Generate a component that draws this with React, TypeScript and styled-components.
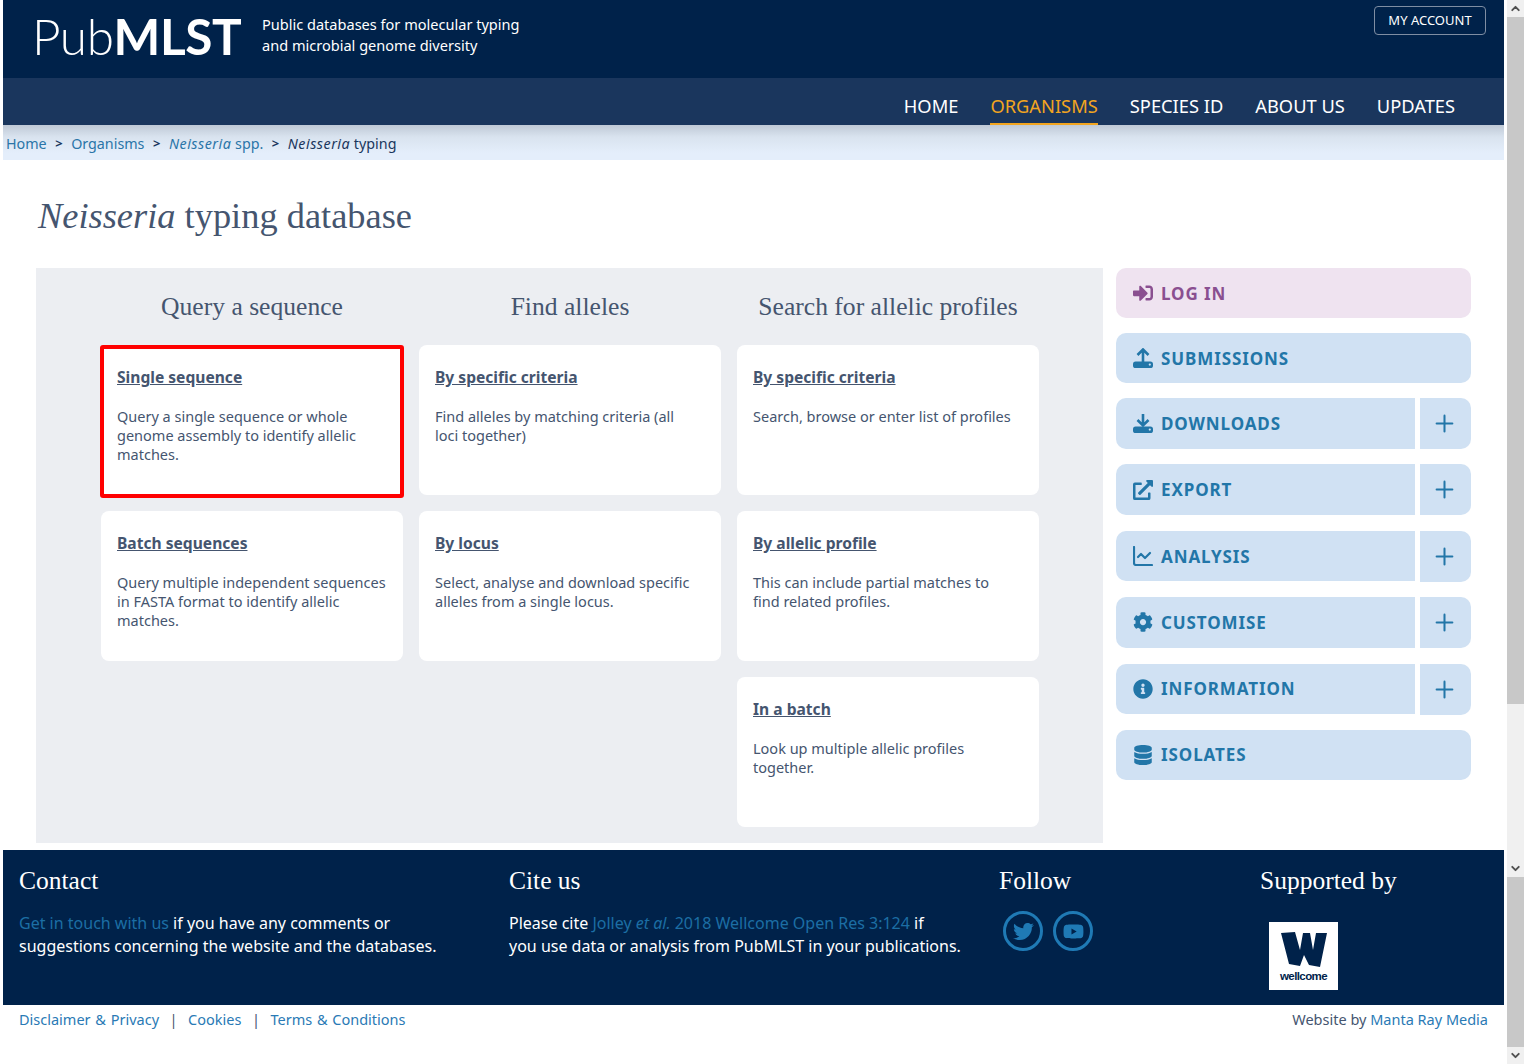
import React from 'react';
import styled, { createGlobalStyle } from 'styled-components';
import {
  FaSignInAlt,
  FaExternalLinkAlt,
  FaCog,
  FaInfoCircle,
  FaDatabase,
  FaTwitter,
  FaYoutube,
} from 'react-icons/fa';
import { Plus, ChevronUp, ChevronDown, ChartLine } from 'lucide-react';

const sans = `'Noto Sans', 'Open Sans', sans-serif`;
const serif = `'Liberation Serif', serif`;

const GlobalStyle = createGlobalStyle`
  html, body {
    margin: 0;
    height: 100%;
    overflow: hidden;
    background: #fff;
  }
  body {
    font-family: ${sans};
    color: #45556f;
  }
`;

const Shell = styled.div`
  display: flex;
  height: 1064px;
`;

const Page = styled.div`
  width: 1501px;
  margin: 0 3px;
  display: flex;
  flex-direction: column;
`;

const Scrollbar = styled.div`
  width: 17px;
  display: flex;
  flex-direction: column;
  background: #f0f0f0;
  color: #505050;
`;

const ScrollArrow = styled.div`
  height: 17px;
  display: flex;
  align-items: center;
  justify-content: center;
`;

const ScrollThumb = styled.div<{ $h: number }>`
  height: ${(p) => p.$h}px;
  background: #c8c8c8;
`;

const ScrollTrack = styled.div`
  flex: 1;
  display: flex;
  flex-direction: column;
  justify-content: flex-end;
`;

const TopBar = styled.header`
  height: 78px;
  background: #00224a;
  display: flex;
  align-items: flex-start;
  color: #fff;
  padding: 0 18px 0 29px;
  box-sizing: border-box;
`;

const Logo = styled.div`
  font-size: 49.5px;
  line-height: 72px;
  font-family: 'Lato', ${sans};
  font-weight: 300;
  letter-spacing: -0.4px;
  width: 230px;
  flex: none;
  b {
    font-weight: 700;
  }
`;

const Tagline = styled.div`
  font-size: 14.55px;
  line-height: 21px;
  padding-top: 14px;
  flex: 1;
`;

const AccountButton = styled.a`
  margin-top: 6px;
  width: 112px;
  height: 29px;
  box-sizing: border-box;
  border: 1px solid #7f8ea3;
  border-radius: 4px;
  font-size: 13px;
  padding-bottom: 2px;
  display: flex;
  align-items: center;
  justify-content: center;
`;

const NavBar = styled.nav`
  height: 47px;
  background: #1a365d;
  display: flex;
  justify-content: flex-end;
  gap: 32px;
  padding-right: 49px;
`;

const NavItem = styled.a<{ $active?: boolean }>`
  height: 47px;
  box-sizing: border-box;
  padding-top: 14px;
  font-size: 18.3px;
  line-height: 28px;
  color: ${(p) => (p.$active ? '#f2a51f' : '#fff')};
  border-bottom: 2px solid ${(p) => (p.$active ? '#f2a51f' : 'transparent')};
`;

const Breadcrumbs = styled.div`
  height: 35px;
  box-sizing: border-box;
  padding: 1px 0 0 3px;
  background: linear-gradient(#bfc9d6 0, #d9e3ef 12px, #e4eefb 28px);
  display: flex;
  align-items: center;
  font-size: 14.3px;
  color: #1a365d;
  i {
    letter-spacing: 0.5px;
  }
`;

const Crumb = styled.a`
  color: #2a75a8;
`;

const CrumbSep = styled.span`
  color: #1a365d;
  font-weight: 700;
  font-size: 13px;
  margin: 0 8.5px;
`;

const Title = styled.h1`
  margin: 0;
  padding: 34px 0 30px 35px;
  font-family: ${serif};
  font-size: 36.4px;
  line-height: 44px;
  font-weight: 400;
  color: #45556f;
`;

const Main = styled.main`
  display: flex;
  align-items: flex-start;
  gap: 13px;
  padding-left: 33px;
`;

const Panel = styled.section`
  width: 1067px;
  height: 575px;
  box-sizing: border-box;
  background: #eceef2;
  display: flex;
  gap: 16px;
  padding: 22px 0 0 65px;
`;

const PanelColumn = styled.div`
  width: 302px;
  display: flex;
  flex-direction: column;
  gap: 16px;
`;

const ColumnTitle = styled.h2`
  margin: 0 0 5px;
  height: 34px;
  font-family: ${serif};
  font-size: 25.6px;
  line-height: 34px;
  font-weight: 400;
  text-align: center;
  color: #45556f;
  white-space: nowrap;
`;

const Card = styled.a<{ $highlight?: boolean }>`
  position: relative;
  display: block;
  height: 150px;
  box-sizing: border-box;
  background: #fff;
  border-radius: 8px;
  padding: 20px 16px 0;
  ${(p) =>
    p.$highlight &&
    `
    &::after {
      content: '';
      position: absolute;
      inset: 0 -1px -3px -1px;
      border: 4px solid #ff0000;
      border-radius: 3px;
    }
  `}
`;

const CardTitle = styled.div`
  font-size: 15.6px;
  line-height: 24px;
  font-weight: 700;
  text-decoration: underline;
  margin-bottom: 18px;
`;

const CardText = styled.div`
  font-size: 14.5px;
  line-height: 19px;
  white-space: pre-line;
`;

const Sidebar = styled.aside`
  width: 355px;
  display: flex;
  flex-direction: column;
  gap: 15px;
`;

const ActionRow = styled.div`
  display: flex;
  gap: 5px;
  height: 51px;
  margin-bottom: 0.4px;
`;

const Action = styled.a<{ $login?: boolean; $split?: boolean }>`
  flex: ${(p) => (p.$split ? '1' : 'none')};
  height: ${(p) => (p.$split ? '50.5px' : '50px')};
  box-sizing: border-box;
  display: flex;
  align-items: center;
  gap: 8px;
  padding-left: 17px;
  font-size: 17px;
  font-weight: 700;
  letter-spacing: 0.9px;
  background: ${(p) => (p.$login ? '#efe3f0' : '#d0e1f3')};
  color: ${(p) => (p.$login ? '#8a4f90' : '#2276a8')};
  border-radius: ${(p) => (p.$split ? '10px 0 0 10px' : '10px')};
  svg {
    width: 20px;
    height: 20px;
    flex: none;
  }
`;

const PlusButton = styled.a`
  width: 51px;
  height: 51px;
  box-sizing: border-box;
  padding-right: 3px;
  display: flex;
  align-items: center;
  justify-content: center;
  background: #d0e1f3;
  color: #2276a8;
  border-radius: 0 10px 10px 0;
`;

const Footer = styled.footer`
  margin-top: 7px;
  height: 155px;
  background: #00224a;
  color: #fff;
  display: grid;
  grid-template-columns: 490px 490px 261px 1fr;
  padding-left: 16px;
`;

const FooterColumn = styled.div`
  padding-top: 14px;
`;

const FooterTitle = styled.h3`
  margin: 0 0 13px;
  font-family: ${serif};
  font-size: 25.5px;
  line-height: 34px;
  font-weight: 400;
`;

const FooterText = styled.p`
  margin: 14px 0 0;
  font-size: 16px;
  line-height: 23px;
  white-space: nowrap;
  a {
    color: #1c6ea4;
  }
`;

const Socials = styled.div`
  display: flex;
  gap: 10px;
  margin-left: 4px;
`;

const Social = styled.a`
  width: 40px;
  height: 40px;
  box-sizing: border-box;
  border: 3px solid #1f7ab5;
  border-radius: 50%;
  color: #1f7ab5;
  display: flex;
  align-items: center;
  justify-content: center;
  font-size: 21px;
`;

const WellcomeLogo = styled.div`
  width: 69px;
  height: 68px;
  margin: 24px 0 0 9px;
  background: #fff;
  color: #00224a;
  display: flex;
  flex-direction: column;
  align-items: center;
  padding-top: 10px;
  box-sizing: border-box;
`;

const WellcomeWord = styled.span`
  font-family: 'Liberation Sans', sans-serif;
  font-weight: 700;
  font-size: 11.5px;
  line-height: 12px;
  letter-spacing: -0.6px;
  margin-top: 3px;
`;

const BottomBar = styled.div`
  display: flex;
  justify-content: space-between;
  padding: 4px 16px 0;
  font-size: 14.5px;
  line-height: 21px;
  a {
    color: #2a7ab5;
  }
`;

const BottomLinks = styled.div`
  word-spacing: 1px;
`;

const BottomSep = styled.span`
  margin: 0 10.5px;
`;

// upload / download arrow above a tray
const TrayIcon = ({ down }: { down?: boolean }) => (
  <svg viewBox="0 0 20 20">
    <path
      d={down ? 'M10 1V12M4.5 7L10 12.5L15.5 7' : 'M10 14V2M4.5 7L10 1.5L15.5 7'}
      fill="none"
      stroke="currentColor"
      strokeWidth="2.6"
    />
    <rect x="0" y="13.5" width="20" height="6.5" rx="2.6" fill="currentColor" />
    <circle cx="16.8" cy="16.6" r="1.1" fill="#d0e1f3" />
  </svg>
);

type CardInfo = { title: string; text: string; highlight?: boolean };

const columns: { title: string; cards: CardInfo[] }[] = [
  {
    title: 'Query a sequence',
    cards: [
      {
        title: 'Single sequence',
        text: 'Query a single sequence or whole genome assembly to identify allelic matches.',
        highlight: true,
      },
      {
        title: 'Batch sequences',
        text: 'Query multiple independent sequences in FASTA format to identify allelic matches.',
      },
    ],
  },
  {
    title: 'Find alleles',
    cards: [
      { title: 'By specific criteria', text: 'Find alleles by matching criteria (all\nloci together)' },
      { title: 'By locus', text: 'Select, analyse and download specific alleles from a single locus.' },
    ],
  },
  {
    title: 'Search for allelic profiles',
    cards: [
      { title: 'By specific criteria', text: 'Search, browse or enter list of profiles' },
      { title: 'By allelic profile', text: 'This can include partial matches to\nfind related profiles.' },
      { title: 'In a batch', text: 'Look up multiple allelic profiles\ntogether.' },
    ],
  },
];

const actions = [
  { label: 'LOG IN', icon: <FaSignInAlt />, login: true },
  { label: 'SUBMISSIONS', icon: <TrayIcon /> },
  { label: 'DOWNLOADS', icon: <TrayIcon down />, split: true },
  { label: 'EXPORT', icon: <FaExternalLinkAlt />, split: true },
  { label: 'ANALYSIS', icon: <ChartLine viewBox="2 2 20 20" strokeWidth={2.2} />, split: true },
  { label: 'CUSTOMISE', icon: <FaCog />, split: true },
  { label: 'INFORMATION', icon: <FaInfoCircle />, split: true },
  { label: 'ISOLATES', icon: <FaDatabase /> },
];

const App = () => {
  return (
    <Shell>
      <GlobalStyle />
      <Page>
        <TopBar>
          <Logo>
            Pub<b>MLST</b>
          </Logo>
          <Tagline>
            Public databases for molecular typing
            <br />
            and microbial genome diversity
          </Tagline>
          <AccountButton>MY ACCOUNT</AccountButton>
        </TopBar>
        <NavBar>
          <NavItem>HOME</NavItem>
          <NavItem $active>ORGANISMS</NavItem>
          <NavItem>SPECIES ID</NavItem>
          <NavItem>ABOUT US</NavItem>
          <NavItem>UPDATES</NavItem>
        </NavBar>
        <Breadcrumbs>
          <Crumb>Home</Crumb>
          <CrumbSep>&gt;</CrumbSep>
          <Crumb>Organisms</Crumb>
          <CrumbSep>&gt;</CrumbSep>
          <Crumb>
            <i>Neisseria</i> spp.
          </Crumb>
          <CrumbSep>&gt;</CrumbSep>
          <span>
            <i>Neisseria</i> typing
          </span>
        </Breadcrumbs>
        <Title>
          <i>Neisseria</i> typing database
        </Title>
        <Main>
          <Panel>
            {columns.map((col) => (
              <PanelColumn key={col.title}>
                <ColumnTitle>{col.title}</ColumnTitle>
                {col.cards.map((card) => (
                  <Card key={card.title} $highlight={card.highlight}>
                    <CardTitle>{card.title}</CardTitle>
                    <CardText>{card.text}</CardText>
                  </Card>
                ))}
              </PanelColumn>
            ))}
          </Panel>
          <Sidebar>
            {actions.map((a) =>
              a.split ? (
                <ActionRow key={a.label}>
                  <Action $split>
                    {a.icon}
                    {a.label}
                  </Action>
                  <PlusButton>
                    <Plus size={27} strokeWidth={1.8} />
                  </PlusButton>
                </ActionRow>
              ) : (
                <Action key={a.label} $login={a.login}>
                  {a.icon}
                  {a.label}
                </Action>
              ),
            )}
          </Sidebar>
        </Main>
        <Footer>
          <FooterColumn>
            <FooterTitle>Contact</FooterTitle>
            <FooterText>
              <a>Get in touch with us</a> if you have any comments or
              <br />
              suggestions concerning the website and the databases.
            </FooterText>
          </FooterColumn>
          <FooterColumn>
            <FooterTitle>Cite us</FooterTitle>
            <FooterText>
              Please cite{' '}
              <a>
                Jolley <i>et al.</i> 2018 Wellcome Open Res 3:124
              </a>{' '}
              if
              <br />
              you use data or analysis from PubMLST in your publications.
            </FooterText>
          </FooterColumn>
          <FooterColumn>
            <FooterTitle>Follow</FooterTitle>
            <Socials>
              <Social>
                <FaTwitter />
              </Social>
              <Social>
                <FaYoutube />
              </Social>
            </Socials>
          </FooterColumn>
          <FooterColumn>
            <FooterTitle>Supported by</FooterTitle>
            <WellcomeLogo>
              <svg width="46" height="35" viewBox="0 0 46 35">
                <path
                  fill="currentColor"
                  d="M0 1 L14 0 L19 18 L22 1 L29 1 L32 18 L35 1 L46 1 L39 35 L28 33 L23 23 L19 34 L8 32 Z"
                />
              </svg>
              <WellcomeWord>wellcome</WellcomeWord>
            </WellcomeLogo>
          </FooterColumn>
        </Footer>
        <BottomBar>
          <BottomLinks>
            <a>Disclaimer &amp; Privacy</a>
            <BottomSep>|</BottomSep>
            <a>Cookies</a>
            <BottomSep>|</BottomSep>
            <a>Terms &amp; Conditions</a>
          </BottomLinks>
          <div>
            Website by <a>Manta Ray Media</a>
          </div>
        </BottomBar>
      </Page>
      <Scrollbar>
        <ScrollArrow>
          <ChevronUp size={13} strokeWidth={3.5} />
        </ScrollArrow>
        <ScrollThumb $h={687} />
        <ScrollTrack>
          <ScrollArrow>
            <ChevronDown size={13} strokeWidth={3.5} />
          </ScrollArrow>
        </ScrollTrack>
        <ScrollThumb $h={170} />
        <ScrollArrow>
          <ChevronDown size={13} strokeWidth={3.5} />
        </ScrollArrow>
      </Scrollbar>
    </Shell>
  );
};

export default App;
